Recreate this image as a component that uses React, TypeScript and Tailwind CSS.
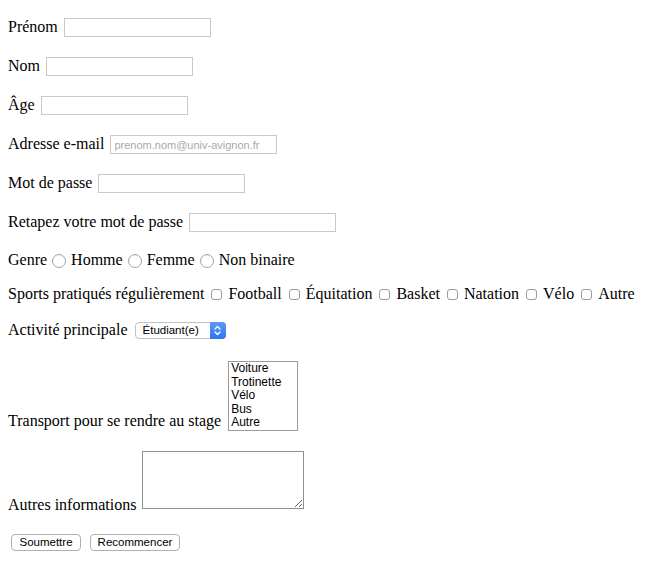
import type { ReactNode } from 'react';

const serif = "font-['Liberation_Serif','Times_New_Roman',serif]";
const sans = "font-['Liberation_Sans',Arial,sans-serif]";

function Row({ children, className = '' }: { children: ReactNode; className?: string }) {
  return <div className={`flex items-center h-[19px] whitespace-nowrap ${className}`}>{children}</div>;
}

function TextField({ label, width = 'w-[147px]', placeholder, type = 'text' }: { label: string; width?: string; placeholder?: string; type?: string }) {
  return (
    <Row>
      <label>{label}</label>
      <input
        type={type}
        placeholder={placeholder}
        className={`ml-[6px] h-[19px] ${width} border border-[#c9c9c9] bg-white px-[3px] text-[11px] ${sans} placeholder:text-[#a9a9a9] outline-none`}
      />
    </Row>
  );
}

function Radio() {
  return <span className="inline-block h-[14px] w-[14px] rounded-full border border-[#a3a3a3] bg-white shadow-[inset_0_1px_1px_rgba(0,0,0,0.06)]" />;
}

function Checkbox() {
  return <span className="inline-block h-[11px] w-[11px] rounded-[3px] border border-[#9c9c9c] bg-white" />;
}

export default function App() {
  const sports = ['Football', 'Équitation', 'Basket', 'Natation', 'Vélo', 'Autre'];
  const transports = ['Voiture', 'Trotinette', 'Vélo', 'Bus', 'Autre'];

  return (
    <form className={`min-h-screen bg-white px-2 pt-[18px] text-[16px] leading-[1.15] text-black ${serif}`}>
      <div className="flex flex-col gap-[20px]">
        <TextField label="Prénom" />
        <TextField label="Nom" />
        <TextField label="Âge" />
        <TextField label="Adresse e-mail" type="email" width="w-[167px]" placeholder="prenom.nom@univ-avignon.fr" />
        <TextField label="Mot de passe" type="password" />
        <TextField label="Retapez votre mot de passe" type="password" />
      </div>

      <Row className="mt-[19px] gap-[5px]">
        <span>Genre</span>
        <Radio />
        <span>Homme</span>
        <Radio />
        <span>Femme</span>
        <Radio />
        <span>Non binaire</span>
      </Row>

      <Row className="mt-[15px] gap-[7px]">
        <span>Sports pratiqués régulièrement</span>
        {sports.map((s) => (
          <span key={s} className="flex items-center gap-[6px]">
            <Checkbox />
            <span>{s}</span>
          </span>
        ))}
      </Row>

      <Row className="mt-[17px]">
        <span>Activité principale</span>
        <div className={`ml-[7px] flex h-[17px] w-[91px] rounded-[4px] border border-[#c2c2c2] bg-white ${sans} text-[11.5px]`}>
          <span className="flex-1 pl-[7px] leading-[15px]">Étudiant(e)</span>
          <span className="-m-px flex w-[16px] items-center justify-center rounded-r-[4px] bg-gradient-to-b from-[#5a9bf8] to-[#2f73ee]">
            <svg width="7" height="11" viewBox="0 0 7 11" fill="none" stroke="white" strokeWidth="1.4" strokeLinecap="round" strokeLinejoin="round">
              <path d="M1 4 3.5 1.5 6 4" />
              <path d="M1 7 3.5 9.5 6 7" />
            </svg>
          </span>
        </div>
      </Row>

      <div className="mt-[21px] flex items-end whitespace-nowrap">
        <span className="mb-[1px]">Transport pour se rendre au stage</span>
        <div className={`ml-[7px] h-[70px] w-[70px] overflow-hidden border border-[#9b9b9b] bg-white pl-[2px] ${sans} text-[12px] leading-[13.6px]`}>
          {transports.map((t) => (
            <div key={t}>{t}</div>
          ))}
        </div>
      </div>

      <div className="mt-[20px] flex items-end whitespace-nowrap">
        <span>Autres informations</span>
        <textarea className="mb-[5px] ml-[6px] h-[58px] w-[162px] border border-[#8f8f8f] bg-white outline-none" />
      </div>

      <div className={`mt-[20px] flex gap-[9px] pl-[3px] ${sans} text-[11.5px]`}>
        <button type="submit" className="h-[17px] w-[70px] rounded-[4px] border border-[#b0b0b0] bg-white leading-[15px]">
          Soumettre
        </button>
        <button type="reset" className="h-[17px] w-[90px] rounded-[4px] border border-[#b0b0b0] bg-white leading-[15px]">
          Recommencer
        </button>
      </div>
    </form>
  );
}
